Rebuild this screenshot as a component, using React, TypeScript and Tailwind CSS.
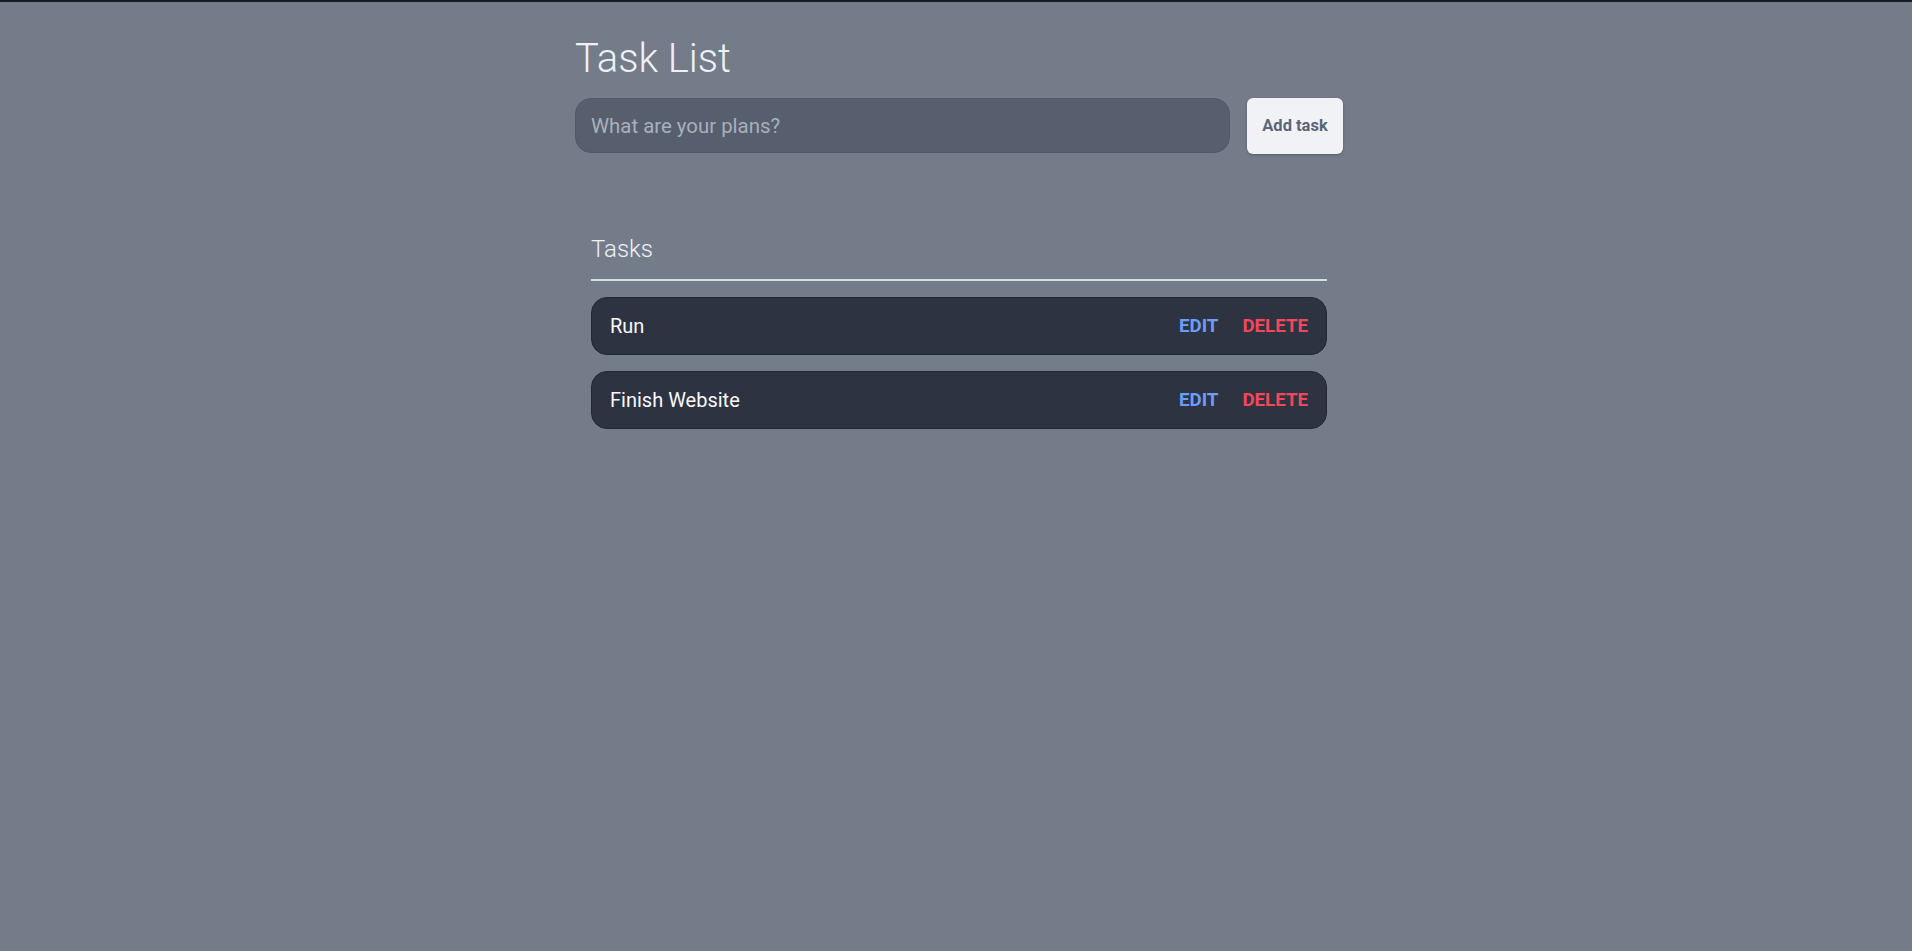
import React from "react";

const tasks = ["Run", "Finish Website"];

export default function App() {
  return (
    <div
      className="min-h-screen w-full bg-[#747c8a] border-t-2 border-[#191b23]"
      style={{ fontFamily: "Roboto, 'Liberation Sans', sans-serif" }}
    >
      <div className="flex justify-center pl-[6px]">
        <div className="w-[768px] pt-[33px]">
          <h1 className="text-[40px] leading-[48px] font-light text-[#eef1f6]">Task List</h1>
          <div className="mt-[15px] flex items-start gap-[17px]">
            <input
              type="text"
              placeholder="What are your plans?"
              className="h-[55px] flex-1 rounded-2xl border border-[#515968] bg-[#575f6e] pl-[15px] pr-4 text-[20.4px] text-white placeholder:text-[#a9b0bc] outline-none"
            />
            <button className="h-[56px] w-[96px] rounded-md bg-[#f1f2f6] text-[16.5px] font-bold text-[#5a6578] shadow-[0_1px_3px_rgba(0,0,0,0.25)]">
              Add task
            </button>
          </div>
          <div className="mx-4 mt-[75px]">
            <h2 className="border-b-2 border-[#d9dce2] pt-[1px] pb-[10px] text-[24px] leading-[39px] font-light text-[#eef1f6]">
              Tasks
            </h2>
            <div className="mt-4 flex flex-col gap-4">
              {tasks.map((t) => (
                <div
                  key={t}
                  className="flex h-[58px] items-center justify-between rounded-2xl border border-[#232733] bg-[#2e3342] pl-[18px] pr-[18px]"
                >
                  <span className="text-[20px] text-[#f7f9fc]">{t}</span>
                  <div className="flex items-center gap-[24px]">
                    <button className="text-[18.7px] font-bold text-[#6c9df7]">EDIT</button>
                    <button className="text-[18.7px] font-bold text-[#f3475b]">DELETE</button>
                  </div>
                </div>
              ))}
            </div>
          </div>
        </div>
      </div>
    </div>
  );
}
